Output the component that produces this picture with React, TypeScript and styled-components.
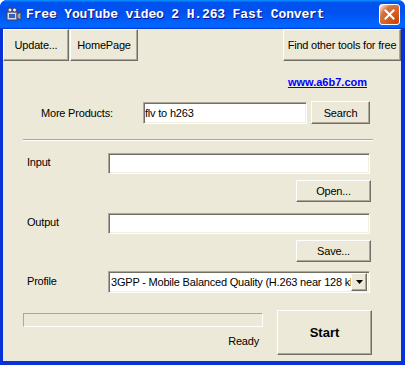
import React from 'react';
import styled, { createGlobalStyle } from 'styled-components';

const GlobalStyle = createGlobalStyle`
  html, body {
    margin: 0;
    padding: 0;
    background: #fff;
  }
  * {
    box-sizing: border-box;
  }
`;

const Window = styled.div`
  width: 405px;
  height: 365px;
  display: flex;
  flex-direction: column;
  background: #0831d9;
  border-radius: 7px 7px 0 0;
  overflow: hidden;
  font-family: "Liberation Sans", Arial, sans-serif;
  font-size: 11px;
  letter-spacing: -0.2px;
  color: #000;
`;

const TitleBar = styled.div`
  height: 29px;
  flex: none;
  display: flex;
  align-items: center;
  padding: 0 5px 0 6px;
  background: linear-gradient(
    to bottom,
    #0997ff 0%,
    #0053ee 8%,
    #0050ee 40%,
    #0066ff 88%,
    #0066ff 93%,
    #005bff 95%,
    #003dd7 96%,
    #003dd7 100%
  );
`;

const TitleText = styled.span`
  flex: 1;
  margin-left: 4px;
  font-family: "Liberation Mono", "DejaVu Sans Mono", monospace;
  font-weight: bold;
  font-size: 13px;
  letter-spacing: -0.15px;
  color: #fff;
  text-shadow: 1px 1px #0f1089;
  white-space: nowrap;
`;

const CloseButton = styled.div`
  width: 21px;
  height: 21px;
  border: 1px solid #fff;
  border-radius: 3px;
  background: radial-gradient(circle at 90% 90%, #cc4600 0%, #dc6527 55%, #cd7546 70%, #ffccb2 90%, #fff 100%);
  display: flex;
  align-items: center;
  justify-content: center;
`;

const Body = styled.div`
  flex: 1;
  margin: 0 4px 4px 3px;
  background: #ece9d8;
  display: flex;
  flex-direction: column;
`;

const Toolbar = styled.div`
  display: flex;
  height: 32px;
`;

const RaisedButton = styled.button<{ $w: number; $h: number }>`
  width: ${p => p.$w}px;
  height: ${p => p.$h}px;
  padding: 0;
  margin: 0;
  background: #ece9d8;
  border: 1px solid;
  border-color: #fff #716f64 #716f64 #fff;
  box-shadow: inset -1px -1px #aca899;
  font-family: inherit;
  font-size: 11px;
  letter-spacing: inherit;
  color: #000;
  white-space: nowrap;
`;

const ToolButton = styled(RaisedButton)<{ $gap?: number }>`
  margin-left: ${p => p.$gap || 0}px;
`;

const Spacer = styled.div`
  flex: 1;
`;

const LinkRow = styled.div`
  margin-top: 15px;
  padding-right: 34px;
  text-align: right;
  line-height: 13px;
`;

const SiteLink = styled.a`
  color: #0000ff;
  font-weight: bold;
  letter-spacing: 0;
  text-decoration: underline;
`;

const ProductsRow = styled.div`
  display: flex;
  align-items: center;
  margin-top: 13px;
  padding-left: 38px;
`;

const Label = styled.div<{ $w: number }>`
  width: ${p => p.$w}px;
  flex: none;
`;

const Field = styled.input<{ $w: number; $h: number }>`
  width: ${p => p.$w}px;
  height: ${p => p.$h}px;
  margin: 0;
  padding: 0 1px;
  background: #fff;
  border: 1px solid;
  border-color: #aca899 #fff #fff #aca899;
  box-shadow: inset 1px 1px #716f64, inset -1px -1px #f1efe2;
  font-family: inherit;
  font-size: 11px;
  letter-spacing: inherit;
  color: #000;
  outline: none;
`;

const SearchButton = styled(RaisedButton)`
  margin-left: 4px;
  align-self: flex-start;
  margin-top: -1px;
`;

const Separator = styled.div`
  margin: 15px 0 0 20px;
  width: 350px;
  border-top: 1px solid #aca899;
  border-bottom: 1px solid #fff;
`;

const FormRow = styled.div<{ $top: number }>`
  display: flex;
  align-items: flex-start;
  margin-top: ${p => p.$top}px;
  padding-left: 24px;
`;

const RowLabel = styled.div<{ $pad: number }>`
  width: 81px;
  flex: none;
  padding-top: ${p => p.$pad}px;
`;

const ActionRow = styled.div`
  display: flex;
  justify-content: flex-end;
  margin-top: 6px;
  padding-right: 30px;
`;

const Select = styled.div`
  width: 262px;
  height: 22px;
  display: flex;
  align-items: center;
  background: #fff;
  border: 1px solid;
  border-color: #aca899 #fff #fff #aca899;
  box-shadow: inset 1px 1px #716f64, inset -1px -1px #f1efe2;
  padding: 2px;
`;

const SelectText = styled.div`
  flex: 1;
  overflow: hidden;
  white-space: nowrap;
`;

const SelectArrow = styled.div`
  width: 16px;
  height: 18px;
  flex: none;
  background: #ece9d8;
  border: 1px solid;
  border-color: #fff #716f64 #716f64 #fff;
  box-shadow: inset -1px -1px #aca899;
  display: flex;
  align-items: center;
  justify-content: center;
`;

const BottomRow = styled.div`
  display: flex;
  margin-top: 17px;
  padding-left: 20px;
`;

const StatusColumn = styled.div`
  width: 240px;
  display: flex;
  flex-direction: column;
`;

const Progress = styled.div`
  margin-top: 3px;
  height: 14px;
  border: 1px solid;
  border-color: #aca899 #fff #fff #aca899;
`;

const Status = styled.div`
  margin-top: 8px;
  text-align: right;
  padding-right: 4px;
`;

const StartButton = styled(RaisedButton)`
  margin-left: 14px;
  font-weight: bold;
  font-size: 13px;
  letter-spacing: 0;
`;

const AppIcon = () => (
  <svg width="16" height="16" viewBox="0 0 16 16">
    <rect x="1" y="5" width="10" height="8" fill="#d8d8e8" stroke="#404060" strokeWidth="1" />
    <rect x="3" y="7" width="6" height="4" fill="#3060c0" />
    <polygon points="11,7 15,5 15,13 11,11" fill="#a0a0b8" stroke="#404060" strokeWidth="1" />
    <circle cx="4" cy="3" r="2" fill="#f0f0f0" stroke="#404060" strokeWidth="1" />
    <circle cx="8.5" cy="3" r="2" fill="#f0f0f0" stroke="#404060" strokeWidth="1" />
  </svg>
);

const CloseX = () => (
  <svg width="11" height="11" viewBox="0 0 11 11">
    <path d="M1.5 1.5 L9.5 9.5 M9.5 1.5 L1.5 9.5" stroke="#fff" strokeWidth="2" strokeLinecap="square" />
  </svg>
);

const DownArrow = () => (
  <svg width="7" height="4" viewBox="0 0 7 4">
    <polygon points="0,0 7,0 3.5,4" fill="#000" />
  </svg>
);

export default function App() {
  return (
    <>
      <GlobalStyle />
      <Window>
        <TitleBar>
          <AppIcon />
          <TitleText>Free YouTube video 2 H.263 Fast Convert</TitleText>
          <CloseButton>
            <CloseX />
          </CloseButton>
        </TitleBar>
        <Body>
          <Toolbar>
            <ToolButton $w={66} $h={32}>Update...</ToolButton>
            <ToolButton $w={68} $h={32} $gap={1}>HomePage</ToolButton>
            <Spacer />
            <ToolButton $w={118} $h={32}>Find other tools for free</ToolButton>
          </Toolbar>

          <LinkRow>
            <SiteLink href="#">www.a6b7.com</SiteLink>
          </LinkRow>

          <ProductsRow>
            <Label $w={102}>More Products:</Label>
            <Field $w={164} $h={22} readOnly defaultValue="flv to h263" />
            <SearchButton $w={59} $h={23}>Search</SearchButton>
          </ProductsRow>

          <Separator />

          <FormRow $top={12}>
            <RowLabel $pad={3}>Input</RowLabel>
            <Field $w={262} $h={21} readOnly defaultValue="" />
          </FormRow>
          <ActionRow>
            <RaisedButton $w={75} $h={22}>Open...</RaisedButton>
          </ActionRow>

          <FormRow $top={11}>
            <RowLabel $pad={3}>Output</RowLabel>
            <Field $w={262} $h={21} readOnly defaultValue="" />
          </FormRow>
          <ActionRow>
            <RaisedButton $w={75} $h={22}>Save...</RaisedButton>
          </ActionRow>

          <FormRow $top={9}>
            <RowLabel $pad={4}>Profile</RowLabel>
            <Select>
              <SelectText>3GPP - Mobile Balanced Quality (H.263 near 128 kbps)</SelectText>
              <SelectArrow>
                <DownArrow />
              </SelectArrow>
            </Select>
          </FormRow>

          <BottomRow>
            <StatusColumn>
              <Progress />
              <Status>Ready</Status>
            </StatusColumn>
            <StartButton $w={95} $h={45}>Start</StartButton>
          </BottomRow>
        </Body>
      </Window>
    </>
  );
}
